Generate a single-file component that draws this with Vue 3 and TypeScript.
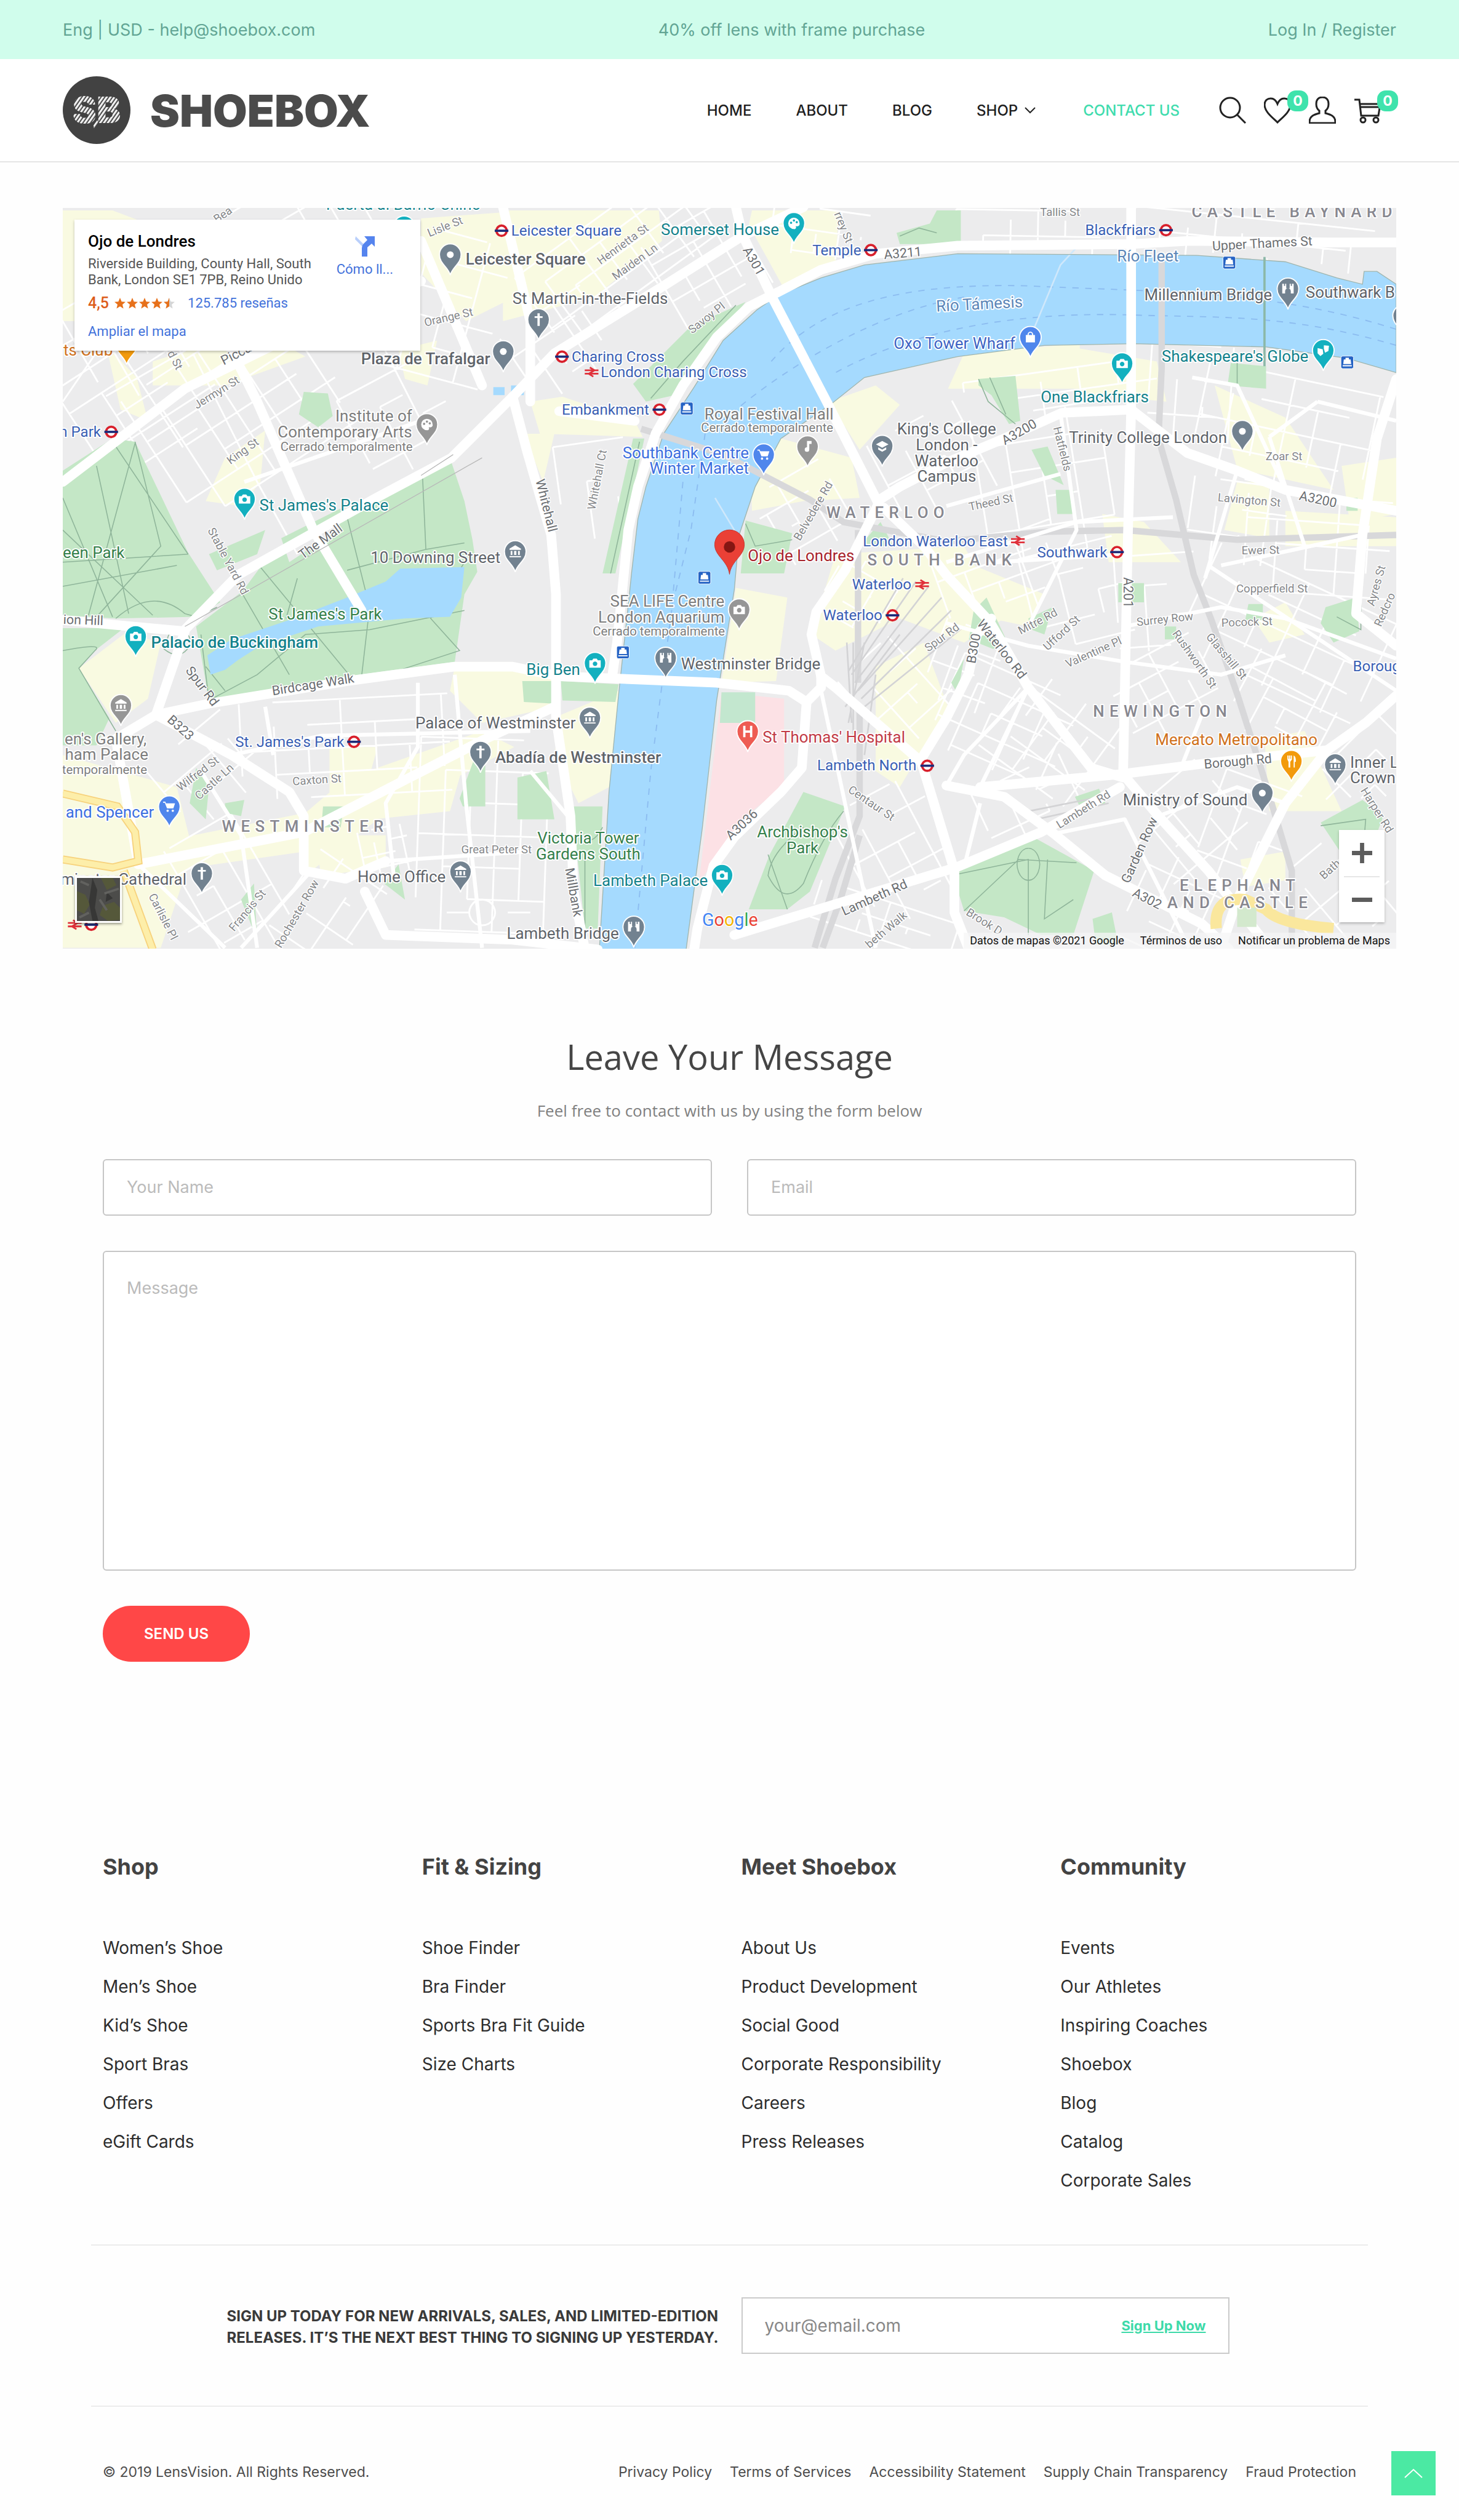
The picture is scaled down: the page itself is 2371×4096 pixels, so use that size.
<script setup lang="ts">
import { ref } from 'vue'

interface Pin { x: number; y: number; c: string; icon: string }
interface Label { x: number; y: number; t: string; c: string; a?: string; k?: string; r?: number }

const nav = ['HOME', 'ABOUT', 'BLOG']

const columns = [
  { title: 'Shop', links: ['Women’s Shoe', 'Men’s Shoe', 'Kid’s Shoe', 'Sport Bras', 'Offers', 'eGift Cards'] },
  { title: 'Fit & Sizing', links: ['Shoe Finder', 'Bra Finder', 'Sports Bra Fit Guide', 'Size Charts'] },
  { title: 'Meet Shoebox', links: ['About Us', 'Product Development', 'Social Good', 'Corporate Responsibility', 'Careers', 'Press Releases'] },
  { title: 'Community', links: ['Events', 'Our Athletes', 'Inspiring Coaches', 'Shoebox', 'Blog', 'Catalog', 'Corporate Sales'] },
]
const legal = ['Privacy Policy', 'Terms of Services', 'Accessibility Statement', 'Supply Chain Transparency', 'Fraud Protection']

const name = ref('')
const email = ref('')
const message = ref('')
const newsletter = ref('')

/* ---------- map geometry ---------- */

// Street grid inside a rotated rectangle, as path data
function grid(cx: number, cy: number, w: number, h: number, deg: number, du: number, dv: number): string {
  const a = (deg * Math.PI) / 180
  const p = (u: number, v: number) =>
    `${(cx + u * Math.cos(a) - v * Math.sin(a)).toFixed(1)} ${(cy + u * Math.sin(a) + v * Math.cos(a)).toFixed(1)}`
  let d = ''
  let n = 0
  for (let u = -w / 2; u <= w / 2; u += du) {
    const cut = (n++ % 3) * dv
    d += `M${p(u, -h / 2 + cut)}L${p(u, h / 2 - (n % 2) * dv)}`
  }
  for (let v = -h / 2; v <= h / 2; v += dv) {
    const cut = (n++ % 3) * du
    d += `M${p(-w / 2 + cut, v)}L${p(w / 2 - (n % 2) * du, v)}`
  }
  return d
}

const minor = [
  grid(75, 250, 110, 90, -33, 24, 17), grid(150, 255, 120, 90, -33, 19, 15), grid(140, 175, 200, 70, -30, 18, 20),
  grid(250, 262, 60, 60, -28, 22, 16), grid(275, 190, 70, 90, 15, 18, 18), grid(385, 160, 120, 55, -36, 14, 13),
  grid(350, 215, 60, 50, -34, 13, 14), grid(440, 165, 60, 60, 60, 13, 15), grid(510, 145, 60, 30, 8, 14, 14),
  grid(370, 305, 44, 60, -8, 18, 24), grid(640, 142, 90, 22, 1, 17, 16), grid(780, 148, 150, 24, 6, 17, 14),
  grid(215, 465, 130, 60, -3, 21, 15), grid(300, 520, 80, 120, 2, 16, 20), grid(140, 560, 90, 60, 60, 17, 16),
  grid(130, 480, 60, 50, -40, 13, 17), grid(205, 565, 60, 50, -56, 19, 15), grid(240, 530, 30, 30, -12, 9, 8),
  grid(580, 290, 60, 60, -28, 20, 14), grid(650, 300, 80, 90, -9, 20, 18), grid(625, 360, 80, 50, -20, 18, 13),
  grid(670, 370, 60, 60, -14, 22, 15), grid(745, 245, 60, 60, 4, 17, 22), grid(800, 270, 110, 70, 12, 18, 17),
  grid(770, 325, 60, 50, 8, 16, 17), grid(820, 340, 90, 60, 4, 19, 15), grid(720, 375, 50, 60, -4, 18, 19),
  grid(800, 395, 120, 70, 25, 20, 17), grid(725, 430, 50, 60, 62, 13, 14), grid(800, 440, 60, 50, 28, 15, 13),
  grid(625, 450, 80, 60, 24, 15, 14), grid(655, 460, 60, 70, -54, 16, 13), grid(600, 415, 40, 50, 20, 12, 14),
  grid(535, 370, 40, 40, -60, 11, 13), grid(560, 430, 50, 60, -42, 14, 17), grid(560, 530, 60, 80, -28, 16, 17),
  grid(550, 575, 90, 28, 18, 15, 12), grid(740, 515, 60, 60, 50, 17, 16), grid(775, 520, 50, 70, 20, 17, 18),
  grid(835, 560, 60, 70, -40, 17, 15), grid(730, 565, 60, 50, -65, 16, 15), grid(850, 480, 40, 60, 45, 15, 16),
  grid(640, 500, 60, 40, -25, 20, 15), grid(500, 320, 50, 50, 60, 14, 15), grid(660, 240, 120, 20, -8, 24, 14),
  'M300 560a8 8 0 1 0 .1 0M292 568h-14M316 568h14M39 250L80 190M39 215L110 175M205 150L262 262M120 220L160 300L185 345',
].join('')

const yellow = [
  'M39 131H70L120 150L80 200H39Z', 'M262 136L330 131L320 185L290 200L262 170Z', 'M313 131H410L412 150L370 185L313 200Z',
  'M468 131H522L520 165L487 178L466 140Z', 'M95 225L160 205L190 222L140 240L95 240Z', 'M66 215L85 235L92 262L75 255Z',
  'M140 285L165 268L162 300L150 315L128 312Z', 'M248 218L272 212L266 240L252 236Z', 'M330 250L350 247L395 262L400 272L336 270Z',
  'M326 270H345L338 300Z', 'M467 283L486 273L530 285L535 310L500 312L468 318Z', 'M516 250L545 240L560 252L535 280Z',
  'M458 366L490 372L483 424L449 425Z', 'M520 345L600 340L625 385L600 400L560 385L520 405L505 395Z',
  'M349 445L385 430L379 490L360 500L345 470Z', 'M49 416L78 394L100 400L92 435L72 450Z',
  'M39 470L110 490L120 530L100 590H39Z', 'M120 520L190 506L215 485L300 455L320 465L235 510L190 545L190 530L85 545Z',
  'M195 520H240V540L200 545Z', 'M205 465H235L225 500H205Z', 'M672 217L720 225L726 250L672 245Z', 'M672 242L590 242L600 220L672 214Z',
  'M756 240L800 260L830 305L770 292Z', 'M800 318L869 322V340H800Z', 'M770 300L790 300L790 335L762 330Z',
  'M686 320L712 325L735 350L690 350Z', 'M835 290L869 285V320L840 325Z', 'M589 345L650 370L640 390L617 385Z',
  'M787 460L812 455L835 505L790 505Z', 'M772 535L800 530L800 548L775 552Z', 'M545 415L575 400L590 440L560 490L545 480Z',
  'M230 490L290 470L280 505L232 510Z', 'M283 415L345 420V440L300 450L280 430Z', 'M780 385L800 375L812 395L790 400Z',
].join('')

const green = [
  'M39 293L70 273L84 275L117 344L137 375L122 384L72 385L39 383Z',
  'M281 288L263 297L216 321L162 353L151 368L122 390L130 436L216 421L283 412L289 370L297 356L294 336L289 312Z',
  'M39 391H77L59 405L49 416L68 447L60 464H39Z', 'M189 244L204 245L207 259L198 266L186 258Z',
  'M592 541L643 521L681 542L668 582H648L625 571L600 567Z', 'M500 493L526 502L504 555L490 566H466L479 532Z',
  'M356 502H375L372 578H364Z', 'M349 424L385 426L383 437L350 436Z', 'M325 424H345V438L326 437Z',
  'M464 188L439 220L420 246L402 250L394 239L430 203Z', 'M394 273H401L383 357H375Z', 'M464 324L493 332L488 357H461Z',
  'M583 131H598V152H572Z', 'M558 145L583 138L572 152H560Z', 'M609 236L632 234L635 262L628 264L617 246L609 240Z',
  'M822 512L848 498L861 508L849 540L834 530Z', 'M696 363H712V375H696Z',
  'M606 380L614 372L628 402L618 404L603 398Z', 'M825 378L844 372L846 393L830 400L822 388Z', 'M640 385L655 378L650 395L642 392Z',
  'M766 226L788 228V242L764 240Z', 'M642 280L652 278L662 302L650 296Z', 'M657 305H668V320H658Z', 'M669 496L684 491L688 500L673 504Z',
  'M680 572L692 568L696 588H682Z', 'M201 502H214L212 515H200Z', 'M118 500L122 478L130 490L128 510Z', 'M140 500L152 498L150 508L140 506Z',
  'M286 497L296 470L302 475V502H288Z', 'M592 425L600 410L596 432Z', 'M239 550L248 538L252 560Z',
  'M175 335L215 315L210 330L180 350Z', 'M130 345L165 330L160 345L135 355Z', 'M535 340L548 325L556 340Z', 'M838 310H845V318H838Z',
  'M322 484L340 480L345 510H322Z', 'M150 560L158 550L160 585Z', 'M725 390H732V398H725Z', 'M777 376H786V386H775Z',
].join('')

const greenPaths = [
  'M39 330L95 383M39 310L70 384M60 290L80 382M70 275L117 345M84 276L55 383M39 350L117 345M39 365L110 352M84 275L100 340L60 384',
  'M135 378L122 384L115 382Q95 365 72 385M162 353L218 421M216 322L230 378L225 421M263 298L265 342L216 355M265 342L289 338',
  'M125 395L130 436M130 436L160 420L190 395L230 392L289 380M151 370L180 420M240 420L286 405L268 385L289 350M185 360L178 385',
  'M592 545L640 535V582M600 567L634 535L670 537M652 535L650 572L668 560M640 528a7 10 0 1 0 .1 0',
  'M500 515Q480 530 478 545Q488 565 500 550Q512 520 525 505M478 532L490 566M464 326L470 340L493 336M398 275L380 357',
  'M128 415L140 430M458 190L425 225L405 248M822 514L850 510L848 535M362 520Q368 528 375 515M364 535V578',
  'M39 405Q65 400 59 405L49 416L72 455M105 395Q120 390 118 402Q112 412 102 404Z',
  'M609 236L615 250L632 264M616 235L626 258M770 226V242M560 147L572 142L583 145M847 366V392L832 384',
].join('')

const water = 'M869 177L857 169H849L848 177L832 173L800 163L745 159L596 158L538 165L511 173L484 184L471 193L450 212L432 241L413 270L402 303L397 323L393 357L392 367L385 432L379 493L373 591H427L437 516L446 436L457 367L460 333L470 303L486 273L518 251L538 235L596 222L650 215L706 214L788 216L838 223L869 232Z'
const lake = 'M289 353L249 354L240 362L216 372L180 386L144 398L129 408L131 420L140 417L148 411L162 402L198 390L252 385L280 384L287 372Z M318 240h8v6h-8Z M307 241h7v5h-7Z'
const ferries = 'M869 215C800 195 760 198 700 196C620 194 560 210 520 232M869 205C790 180 720 182 640 178C560 176 510 190 480 225M600 185C540 195 480 235 450 262M425 300L418 380L405 480L395 590M440 262L430 330L420 370M600 150'

const rails = 'M723 159V229L721 273L732 311L743 358L754 386L770 432L786 482L804 542V590M869 333L770 336L700 330L652 331L589 337L525 325L504 311L450 283L399 267M534 330L534 425M535 440V508L520 547L507 590M535 520L523 560L512 590'
const sheds = 'M532 425L578 365M530 420L570 362M528 418L562 360M534 430L586 372M536 435L592 380M526 440L560 395M538 440L600 390M528 450L538 400M531 460V400M538 470L545 420M527 400L530 450M640 505L690 495M645 510L690 500'

const major = [
  'M458 129L462 146L480 184L515 251L546 312', 'M500 129L462 147L413 178L374 202L345 220L319 247L281 285L234 310L148 358L115 392',
  'M319 247L328 281L343 333L346 370V447L355 508L357 555L364 591', 'M484 182L466 191L446 210L425 240L408 270L397 303L391 330L388 360L384 400L381 421',
  'M484 182L511 168L545 158L596 153L704 152L740 150L829 151H869', 'M704 129V255L702 333L699 482L721 508L752 542L790 590',
  'M546 312L560 303L589 288L625 273L661 257L704 255L739 282L770 293L800 305L869 318', 'M869 236L857 273L848 333L844 382L869 402',
  'M39 386L115 393L97 445L144 470L180 493L189 508V542L215 547L240 536', 'M97 445L130 438L216 424L283 415H319L348 421L446 425L491 430L502 437',
  'M511 421L505 395L508 381L526 355L546 315', 'M502 437L499 478L486 493L457 521L444 539L434 578L432 591',
  'M502 437L511 428L511 421L520 428L572 473', 'M86 538L189 518L253 485L300 461L345 440', 'M86 538L72 460L97 445',
  'M227 555L240 582L319 585L372 591', 'M550 316L575 340L589 358L616 387L640 428L679 478L699 484',
  'M573 473L589 447L603 419L608 395L617 385', 'M573 473L594 542V568L603 591', 'M457 582L493 571L595 540L648 518L697 490',
  'M589 489L625 496L656 519L688 545L748 575L765 591', 'M610 490L697 482L752 475L826 467L850 450L869 433',
  'M826 467L800 500L770 560L760 590', 'M39 300L115 242L170 215L262 175', 'M105 140L160 250L195 330L225 380', 'M262 150L300 240',
  'M313 129L330 200V250', 'M348 256L395 262',
]
const secondary = [
  'M589 388L640 402L700 412L760 420L800 408', 'M620 350L700 345', 'M848 333L760 352M752 352L869 430', 'M700 390L760 378L800 385L869 410',
  'M770 293L750 360', 'M800 305L770 240L742 235', 'M820 250L869 262M820 250L790 272', 'M790 272L812 340', 'M660 257L670 330L640 390',
  'M589 315L660 295', 'M589 350L670 325L730 322', 'M152 300L262 262', 'M165 440L170 470M260 425V465L240 500L245 545', 'M283 420L290 500L300 590',
  'M144 470L200 458L330 455', 'M86 538L140 590M125 480L150 520L160 590', 'M192 544L150 590', 'M240 536L330 530', 'M511 430L545 590',
  'M330 480L355 510', 'M610 500L600 540M640 428L610 490M656 519L700 510L740 590', 'M721 508L770 490L800 500', 'M750 440L735 478', 'M640 428L600 470L589 489',
]

const glyphs: Record<string, string> = {
  dot: 'M-6 0a6 6 0 1 0 12 0a6 6 0 1 0 -12 0Z',
  camera: 'M-10 -5H-5L-3 -8H3L5 -5H10V8H-10ZM0 -3a4 4 0 1 0 .1 0Z',
  cross: 'M-2 -11H2V-6H7V-3H2V11H-2V-3H-7V-6H-2Z',
  bank: 'M0 -11L10 -5V-3H-10V-5ZM-8 -1H-5V6H-8ZM-2 -1H2V6H-2ZM5 -1H8V6H5ZM-10 8H10V10H-10Z',
  bridge: 'M-10 -9H-7V-5H-5V-9H-3V-1H3V-9H5V-5H7V-9H10V8H5V4A5 5 0 0 0 -5 4V8H-10Z',
  cart: 'M-11 -9H-7L-6 -6H10L7 3H-4L-8 -7H-11ZM-3 5a2 2 0 1 0 .1 0ZM6 5a2 2 0 1 0 .1 0Z',
  bag: 'M-8 -4H-5A5 6 0 0 1 5 -4H8V9H-8ZM-3 -4H3A3 4 0 0 0 -3 -4Z',
  note: 'M-1 -10H7V-5H3V5A4 4 0 1 1 -1 1Z',
  cap: 'M0 -9L11 -3L0 3L-11 -3ZM-7 2L0 6L7 2V6L0 10L-7 6Z',
  palette: 'M0 -10A10 10 0 1 0 0 10A3 3 0 0 0 3 5H7A4 4 0 0 0 10 0A10 10 0 0 0 0 -10ZM-5 -3a2 2 0 1 0 .1 0ZM0 -7a2 2 0 1 0 .1 0ZM5 -4a2 2 0 1 0 .1 0Z',
  masks: 'M-10 -4L-1 -2L0 6L-5 10L-10 5ZM1 -9L10 -8L9 1L3 4L1 -3Z',
  food: 'M-7 -10H-5V-4H-4V-10H-2V-4H-1V-10H1V-3L-2 1V11H-5V1L-7 -3ZM4 -10Q8 -9 8 1H6V11H4Z',
  hospital: 'M-8 -10H-4V-2H4V-10H8V10H4V2H-4V10H-8Z',
}
const SL = '#728290', GY = '#969696', TE = '#13b0bf', BL = '#4f86ec', OR = '#f29a0c'
const pins: Pin[] = [
  { x: 790, y: 483, c: SL, icon: 'dot' }, { x: 883, y: 653, c: SL, icon: 'dot' }, { x: 749, y: 781, c: GY, icon: 'palette' },
  { x: 429, y: 912, c: TE, icon: 'camera' }, { x: 222, y: 640, c: OR, icon: 'food' }, { x: 709, y: 434, c: TE, icon: 'camera' },
  { x: 904, y: 1004, c: SL, icon: 'bank' }, { x: 945, y: 597, c: SL, icon: 'cross' }, { x: 1393, y: 428, c: TE, icon: 'palette' },
  { x: 1340, y: 834, c: BL, icon: 'cart' }, { x: 1417, y: 820, c: GY, icon: 'note' }, { x: 1548, y: 819, c: SL, icon: 'cap' },
  { x: 1808, y: 628, c: BL, icon: 'bag' }, { x: 1969, y: 674, c: TE, icon: 'camera' }, { x: 2260, y: 543, c: SL, icon: 'bridge' },
  { x: 2322, y: 651, c: TE, icon: 'masks' }, { x: 2180, y: 793, c: SL, icon: 'dot' }, { x: 238, y: 1153, c: TE, icon: 'camera' },
  { x: 212, y: 1274, c: GY, icon: 'bank' }, { x: 843, y: 1356, c: SL, icon: 'cross' }, { x: 297, y: 1452, c: BL, icon: 'cart' },
  { x: 354, y: 1569, c: SL, icon: 'cross' }, { x: 808, y: 1566, c: SL, icon: 'bank' }, { x: 1297, y: 1106, c: GY, icon: 'camera' },
  { x: 1044, y: 1200, c: TE, icon: 'camera' }, { x: 1168, y: 1191, c: SL, icon: 'bridge' }, { x: 1035, y: 1296, c: SL, icon: 'bank' },
  { x: 1312, y: 1320, c: '#ee5b52', icon: 'hospital' }, { x: 1267, y: 1572, c: TE, icon: 'camera' }, { x: 1112, y: 1663, c: SL, icon: 'bridge' },
  { x: 2266, y: 1372, c: OR, icon: 'food' }, { x: 2343, y: 1378, c: SL, icon: 'bank' }, { x: 2215, y: 1428, c: SL, icon: 'dot' },
  { x: 2463, y: 590, c: SL, icon: 'dot' },
]
const tubes = [[880, 405], [195, 758], [986, 626], [1157, 719], [1528, 439], [2046, 404], [1960, 969], [621, 1302], [1566, 1080], [1627, 1344], [160, 1623]]
const stations = [[1038, 653], [1786, 949], [1618, 1026], [131, 1623]]
const piers = [[1205, 717], [2157, 461], [2364, 636], [1236, 1014], [1093, 1145]]

const P = '#5f646a', G = '#7d7d7d', T = '#14828c', B = '#3a5fb4', V = '#35804b', S = '#3d6fe0', O = '#d0711c', A = '#87878f'
const labels: Label[] = [
  { x: 572, y: 368, t: 'Puerta al Barrio Chino', c: T }, { x: 817, y: 464, t: 'Leicester Square', c: P, k: 'mid' },
  { x: 860, y: 639, t: 'Plaza de Trafalgar', c: P, a: 'end', k: 'mid' }, { x: 723, y: 740, t: 'Institute of', c: G, a: 'end' },
  { x: 723, y: 768, t: 'Contemporary Arts', c: G, a: 'end' }, { x: 724, y: 791, t: 'Cerrado temporalmente', c: G, a: 'end', k: 'small' },
  { x: 455, y: 896, t: 'St James\'s Palace', c: T }, { x: 878, y: 988, t: '10 Downing Street', c: P, a: 'end' },
  { x: 110, y: 979, t: 'een Park', c: V }, { x: 177, y: 767, t: 'n Park', c: B, a: 'end', k: 'transit' }, { x: 111, y: 624, t: 'ts Club', c: O },
  { x: 897, y: 414, t: 'Leicester Square', c: B, k: 'transit' }, { x: 1367, y: 413, t: 'Somerset House', c: T, a: 'end' },
  { x: 1511, y: 448, t: 'Temple', c: B, a: 'end', k: 'transit' }, { x: 899, y: 533, t: 'St Martin-in-the-Fields', c: P },
  { x: 1003, y: 635, t: 'Charing Cross', c: B, k: 'transit' }, { x: 1054, y: 662, t: 'London Charing Cross', c: B, k: 'transit' },
  { x: 1139, y: 728, t: 'Embankment', c: B, a: 'end', k: 'transit' }, { x: 1236, y: 736, t: 'Royal Festival Hall', c: G },
  { x: 1230, y: 758, t: 'Cerrado temporalmente', c: G, k: 'small' }, { x: 1314, y: 805, t: 'Southbank Centre', c: S, a: 'end' },
  { x: 1314, y: 832, t: 'Winter Market', c: S, a: 'end' }, { x: 1661, y: 762, t: 'King\'s College', c: P, a: 'middle' },
  { x: 1661, y: 790, t: 'London -', c: P, a: 'middle' }, { x: 1661, y: 818, t: 'Waterloo', c: P, a: 'middle' },
  { x: 1661, y: 846, t: 'Campus', c: P, a: 'middle' }, { x: 1450, y: 909, t: 'WATERLOO', c: A, k: 'area' },
  { x: 1312, y: 985, t: 'Ojo de Londres', c: '#a8242c' }, { x: 1514, y: 959, t: 'London Waterloo East', c: B, k: 'transit' },
  { x: 1522, y: 992, t: 'SOUTH BANK', c: A, k: 'area' }, { x: 2028, y: 412, t: 'Blackfriars', c: B, a: 'end', k: 'transit' },
  { x: 2091, y: 381, t: 'CASTLE BAYNARD', c: A, k: 'area' }, { x: 1960, y: 459, t: 'Río Fleet', c: '#5b86b8' },
  { x: 1719, y: 543, t: 'Río Támesis', c: '#5b86b8', a: 'middle', r: -3 }, { x: 1568, y: 612, t: 'Oxo Tower Wharf', c: '#3d63c4' },
  { x: 2232, y: 527, t: 'Millennium Bridge', c: P, a: 'end' }, { x: 2291, y: 523, t: 'Southwark B', c: P },
  { x: 2296, y: 635, t: 'Shakespeare\'s Globe', c: T, a: 'end' }, { x: 1826, y: 706, t: 'One Blackfriars', c: T },
  { x: 2153, y: 778, t: 'Trinity College London', c: P, a: 'end' }, { x: 1943, y: 978, t: 'Southwark', c: B, a: 'end', k: 'transit' },
  { x: 471, y: 1087, t: 'St James\'s Park', c: V }, { x: 265, y: 1137, t: 'Palacio de Buckingham', c: T, k: 'mid' },
  { x: 257, y: 1307, t: 'en\'s Gallery,', c: G, a: 'end' }, { x: 260, y: 1334, t: 'ham Palace', c: G, a: 'end' },
  { x: 258, y: 1358, t: 'temporalmente', c: G, a: 'end', k: 'small' }, { x: 604, y: 1311, t: 'St. James\'s Park', c: B, a: 'end', k: 'transit' },
  { x: 1010, y: 1279, t: 'Palace of Westminster', c: P, a: 'end' }, { x: 869, y: 1339, t: 'Abadía de Westminster', c: P, k: 'mid' },
  { x: 270, y: 1435, t: 'and Spencer', c: S, a: 'end' }, { x: 389, y: 1460, t: 'WESTMINSTER', c: A, k: 'area' },
  { x: 327, y: 1553, t: 'minster Cathedral', c: P, a: 'end' }, { x: 782, y: 1548, t: 'Home Office', c: P, a: 'end' },
  { x: 1599, y: 1035, t: 'Waterloo', c: B, a: 'end', k: 'transit' }, { x: 1271, y: 1065, t: 'SEA LIFE Centre', c: G, a: 'end' },
  { x: 1271, y: 1093, t: 'London Aquarium', c: G, a: 'end' }, { x: 1272, y: 1116, t: 'Cerrado temporalmente', c: G, a: 'end', k: 'small' },
  { x: 1548, y: 1088, t: 'Waterloo', c: B, a: 'end', k: 'transit' }, { x: 1018, y: 1185, t: 'Big Ben', c: T, a: 'end' },
  { x: 1195, y: 1175, t: 'Westminster Bridge', c: P }, { x: 1338, y: 1303, t: 'St Thomas\' Hospital', c: '#c23b46' },
  { x: 1608, y: 1352, t: 'Lambeth North', c: B, a: 'end', k: 'transit' }, { x: 1032, y: 1481, t: 'Victoria Tower', c: V, a: 'middle' },
  { x: 1032, y: 1509, t: 'Gardens South', c: V, a: 'middle' }, { x: 1408, y: 1470, t: 'Archbishop\'s', c: V, a: 'middle' },
  { x: 1408, y: 1498, t: 'Park', c: V, a: 'middle' }, { x: 1242, y: 1555, t: 'Lambeth Palace', c: T, a: 'end' },
  { x: 1086, y: 1648, t: 'Lambeth Bridge', c: P, a: 'end' }, { x: 2374, y: 1178, t: 'Boroug', c: B, k: 'transit' },
  { x: 1918, y: 1258, t: 'NEWINGTON', c: A, k: 'area' }, { x: 2027, y: 1308, t: 'Mercato Metropolitano', c: O },
  { x: 2369, y: 1348, t: 'Inner L', c: P }, { x: 2369, y: 1375, t: 'Crown', c: P },
  { x: 2189, y: 1413, t: 'Ministry of Sound', c: P, a: 'end' }, { x: 2070, y: 1564, t: 'ELEPHANT', c: A, k: 'area' },
  { x: 2048, y: 1594, t: 'AND CASTLE', c: A, k: 'area' },
]

// Street names: x, y of the middle of the name, rotation, text, and whether it is a main road
const streets: [number, number, number, string, boolean?][] = [
  [781, 398, -22, 'Lisle St'], [787, 557, -13, 'Orange St'], [380, 689, -32, 'Jermyn St'], [426, 792, -36, 'King St'],
  [562, 950, -36, 'The Mall', true], [400, 985, 62, 'Stable Yard Rd'], [414, 621, -27, 'Picca', true], [391, 377, -35, 'Bea'],
  [307, 632, 62, 'd St'],
  [1584, 444, -5, 'A3211', true], [1093, 429, -36, 'Henrietta St'], [1114, 460, -36, 'Maiden Ln'], [1323, 458, 60, 'A301', true],
  [1240, 558, -38, 'Savoy Pl'], [1048, 842, -79, 'Whitehall Ct'], [959, 887, 76, 'Whitehall', true], [1427, 897, -60, 'Belvedere Rd'],
  [1480, 399, 68, 'rrey St'], [1860, 373, 0, 'Tallis St'], [2215, 427, -3, 'Upper Thames St', true], [1788, 758, -30, 'A3200', true],
  [1864, 788, 76, 'Hatfields'], [2253, 801, 0, 'Zoar St'], [1739, 882, -12, 'Theed St'], [2192, 878, 5, 'Lavington St'],
  [2313, 876, 12, 'A3200', true], [2212, 966, -1, 'Ewer St'], [146, 1088, 2, 'ion Hill', true], [549, 1201, -9, 'Birdcage Walk', true],
  [355, 1204, 53, 'Spur Rd', true], [317, 1277, 42, 'B323', true], [347, 1358, -37, 'Wilfred St'], [376, 1372, -42, 'Castle Ln'],
  [556, 1369, -4, 'Caxton St'], [871, 1491, 0, 'Great Peter St'], [286, 1609, 63, 'Carlisle Pl'], [434, 1598, -50, 'Francis St'],
  [521, 1604, -60, 'Rochester Row'], [1653, 1119, -36, 'Spur Rd'], [1529, 1410, 34, 'Centaur St'], [1301, 1447, -43, 'A3036', true],
  [1007, 1566, 80, 'Millbank', true], [1534, 1575, -24, 'Lambeth Rd', true], [1555, 1632, -40, 'beth Walk'], [1980, 1040, 90, 'A201', true],
  [2232, 1033, 0, 'Copperfield St'], [2415, 1028, -74, 'Ayres St'], [2430, 1070, -66, 'Redcro'], [1821, 1091, -28, 'Mitre Rd'],
  [1863, 1111, -43, 'Ufford St'], [2044, 1087, -6, 'Surrey Row'], [2188, 1092, -2, 'Pocock St'], [1708, 1138, -80, 'B300', true],
  [1758, 1139, 52, 'Waterloo Rd', true], [1919, 1145, -24, 'Valentine Pl'], [2096, 1157, 55, 'Rushworth St'], [2152, 1152, 50, 'Glasshill St'],
  [2172, 1336, -5, 'Borough Rd', true], [1901, 1421, -32, 'Lambeth Rd'], [2416, 1422, 58, 'Harper Rd'], [1999, 1492, -66, 'Garden Row', true],
  [2334, 1526, -42, 'Bath'], [2013, 1577, 27, 'A302', true], [1727, 1618, 32, 'Brook D'],
]
</script>

<template>
  <div class="page">
    <div class="topbar">
      <span>Eng | USD - help@shoebox.com</span>
      <span>40% off lens with frame purchase</span>
      <a href="#">Log In / Register</a>
    </div>

    <header class="header">
      <a class="brand" href="#" aria-label="Shoebox">
        <svg class="brand-mark" viewBox="0 0 108 108" aria-hidden="true">
          <defs>
            <pattern id="hatch" width="5" height="5" patternUnits="userSpaceOnUse" patternTransform="rotate(35)">
              <rect width="5" height="5" fill="#484848" />
              <rect width="3" height="5" fill="#f4f4f4" />
            </pattern>
          </defs>
          <circle cx="54" cy="54" r="54" fill="#424242" />
          <text x="54" y="75" text-anchor="middle" class="brand-letters" fill="url(#hatch)">SB</text>
          <path d="M49 78L55 70L57 74L50 84Z" fill="url(#hatch)" />
        </svg>
        <span class="brand-name">SHOEBOX</span>
      </a>
      <nav class="nav">
        <a v-for="n in nav" :key="n" href="#">{{ n }}</a>
        <a href="#" class="has-menu">SHOP
          <svg width="20" height="12" viewBox="0 0 20 12"><path d="M2 2L10 10L18 2" fill="none" stroke="#222" stroke-width="2" /></svg>
        </a>
        <a href="#" class="active">CONTACT US</a>
      </nav>
      <div class="tools">
        <button type="button" aria-label="Search">
          <svg viewBox="0 0 44 44"><circle cx="18" cy="18" r="16" /><path d="M29 29L43 43" /></svg>
        </button>
        <button type="button" aria-label="Wishlist">
          <svg viewBox="0 0 44 44"><path d="M22 42C14 34 1 25 1 13C1 6 6 3 11 3C17 3 20 7 22 12C24 7 27 3 33 3C38 3 43 6 43 13C43 25 30 34 22 42Z" /></svg>
          <span class="badge">0</span>
        </button>
        <button type="button" aria-label="Account">
          <svg viewBox="0 0 44 44"><path d="M1 43V41C1 31 10 29 17 27V23C13 20 12 16 12 12C12 5 16 1 22 1S32 5 32 12C32 16 31 20 27 23V27C34 29 43 31 43 41V43Z" /></svg>
        </button>
        <button type="button" aria-label="Cart">
          <svg viewBox="0 0 44 44"><path d="M1 5H9L12 31H40L43 12H10M11 17H42" /><circle cx="15" cy="38" r="4" /><circle cx="36" cy="38" r="4" /></svg>
          <span class="badge">0</span>
        </button>
      </div>
    </header>

    <main>
      <section class="map">
        <svg class="canvas" viewBox="110 365 2340 1300" role="img" aria-label="Map of central London">
          <svg x="110" y="365" width="2340" height="1300" viewBox="39 129.5 830 461" preserveAspectRatio="none">
            <rect x="39" y="129" width="830" height="463" fill="#ececed" />
            <path :d="yellow" fill="#f9fae1" />
            <path :d="minor" fill="none" stroke="#fff" stroke-width="1.1" />
            <path d="M449 431L488 435V489L468 505L448 532L435 549Z" fill="#fce1e5" />
            <path d="M449 431H470V450H448Z" fill="#c3e7cf" />
            <path :d="green" fill="#c4e7c6" />
            <path :d="greenPaths" fill="none" stroke="#8fb59a" stroke-width=".6" />
            <path :d="water + lake" fill="#a5dafe" />
            <path :d="ferries" fill="none" stroke="#8cbcf0" stroke-width=".7" stroke-dasharray="4 4" />
            <path d="M640 213L660 165L672 152M445 310L460 335" fill="none" stroke="#cfe8fb" stroke-width="1" />
            <path :d="water" fill="none" stroke="#9fb5ae" stroke-width=".5" />
            <path :d="rails" fill="none" stroke="#d8d8da" stroke-width="4" />
            <path :d="sheds" fill="none" stroke="#d3d3d5" stroke-width="1" />
            <path v-for="d in secondary" :key="d" :d="d" fill="none" stroke="#fff" stroke-width="2.4" stroke-linejoin="round" />
            <path v-for="d in major" :key="d" :d="d" fill="none" stroke="#fff" stroke-width="6" stroke-linejoin="round" stroke-linecap="round" />
            <path d="M787 160V228" stroke="#8cb8a8" stroke-width="1.4" fill="none" />
            <path d="M300 285L115 390M282 283L262 296" stroke="#b8b8b8" stroke-width=".5" fill="none" />
            <path d="M39 494L73 502L84 518L86 536L70 540L39 535M77 542L95 591" fill="none" stroke="#f7d27c" stroke-width="5" />
            <path d="M39 494L73 502L84 518L86 536L70 540L39 535M77 542L95 591" fill="none" stroke="#fdeea9" stroke-width="3.6" />
            <path d="M757 578Q755 558 775 560L788 566Q795 575 830 578" fill="none" stroke="#fae79d" stroke-width="7" />
            <path d="M770 565h12v12h-12Z" fill="#d3e9cd" />
          </svg>

          <text
            v-for="(s, i) in streets" :key="'s' + i" class="street" :class="{ main: s[4] }"
            :transform="`translate(${s[0]} ${s[1]}) rotate(${s[2]})`" text-anchor="middle" dominant-baseline="central"
          >{{ s[3] }}</text>

          <g v-for="(p, i) in pins" :key="'p' + i" :transform="`translate(${p.x} ${p.y})`">
            <path d="M0 0C-3 -14 -19 -20 -19 -36A19 19 0 1 1 19 -36C19 -20 3 -14 0 0Z" :fill="p.c" stroke="#fff" stroke-width="2" />
            <path :d="glyphs[p.icon]" transform="translate(0 -36)" fill="#fff" fill-rule="evenodd" />
          </g>
          <g v-for="(p, i) in tubes" :key="'t' + i" :transform="`translate(${p[0]} ${p[1]})`">
            <circle r="9" fill="#fff" stroke="#d8202c" stroke-width="4" />
            <rect x="-12" y="-2" width="24" height="4" fill="#1d2a78" />
          </g>
          <path
            v-for="(p, i) in stations" :key="'r' + i" :transform="`translate(${p[0]} ${p[1]})`"
            d="M-12 -3H12M-12 3H12M-3 -8L5 -3L-5 3L3 8" fill="none" stroke="#e0303a" stroke-width="3"
          />
          <g v-for="(p, i) in piers" :key="'f' + i" :transform="`translate(${p[0]} ${p[1]})`">
            <rect x="-11" y="-11" width="22" height="22" rx="3" fill="#2563c4" stroke="#fff" stroke-width="1" />
            <path d="M-3 -8H3V-5H6L7 3H-7L-6 -5H-3ZM-8 5H8V7H-8Z" fill="#fff" />
          </g>
          <text
            v-for="(l, i) in labels" :key="'l' + i" class="label" :class="l.k" :fill="l.c" :text-anchor="l.a || 'start'"
            :transform="`translate(${l.x} ${l.y}) rotate(${l.r || 0})`"
          >{{ l.t }}</text>

          <g transform="translate(1280 1008)">
            <path d="M0 0C-3 -24 -26 -32 -26 -52A26 26 0 1 1 26 -52C26 -32 3 -24 0 0Z" fill="#ea4036" stroke="#c4302a" stroke-width="1" />
            <circle cy="-48" r="10" fill="#851613" />
          </g>
          <text x="1232" y="1625" class="google"><tspan fill="#4285f4">G</tspan><tspan fill="#ea4335">o</tspan><tspan fill="#f4b400">o</tspan><tspan fill="#4285f4">g</tspan><tspan fill="#34a853">l</tspan><tspan fill="#ea4335">e</tspan></text>
        </svg>

        <div class="card">
          <div class="place">
            <strong>Ojo de Londres</strong>
            <p>Riverside Building, County Hall, South<br>Bank, London SE1 7PB, Reino Unido</p>
            <div class="rating">
              <b>4,5</b>
              <svg width="100" height="20" viewBox="0 0 100 20" aria-hidden="true">
                <g v-for="n in 5" :key="n" :transform="`translate(${(n - 1) * 20} 0)`">
                  <path d="M10 1L12.600 7.200L19 7.800L14 12L15.600 18.500L10 15L4.400 18.500L6 12L1 7.800L7.400 7.200Z" :fill="n === 5 ? '#d5d5d5' : '#e7711b'" />
                  <path v-if="n === 5" d="M10 1V15L4.400 18.500L6 12L1 7.800L7.400 7.200Z" fill="#e7711b" />
                </g>
              </svg>
              <a href="#">125.785 reseñas</a>
            </div>
            <a href="#">Ampliar el mapa</a>
          </div>
          <a class="route" href="#">
            <svg width="34" height="34" viewBox="0 0 34 34" aria-hidden="true">
              <path d="M2 1L17 16V22L1 6Z" fill="#b9cffb" />
              <path d="M12 34V20Q12 16 15 13L21 7L16 1H33V18L28 13L21 19V34Z" fill="#5584ee" />
            </svg>
            Cómo ll...
          </a>
        </div>

        <button class="satellite" type="button" aria-label="Satellite view">
          <svg viewBox="0 0 72 72" aria-hidden="true">
            <rect width="72" height="72" fill="#4c4c4a" />
            <path d="M0 22L14 28L22 44L12 60L0 54ZM44 46L62 40L72 50V70L52 72L38 62ZM40 0H60L66 12L50 20Z" fill="#55583a" />
            <path d="M26 0L34 20L30 50L36 72H26L20 40ZM50 24L60 34L48 40Z" fill="#373736" />
            <path d="M6 6L20 12M46 26L70 18M38 36L50 54M4 66L20 58" stroke="#62625f" stroke-width="4" />
          </svg>
        </button>

        <div class="zoom">
          <button type="button" aria-label="Zoom in"><svg viewBox="0 0 34 34"><path d="M17 0V34M0 17H34" /></svg></button>
          <button type="button" aria-label="Zoom out"><svg viewBox="0 0 34 34"><path d="M0 17H34" /></svg></button>
        </div>

        <div class="credits">
          <span>Datos de mapas ©2021 Google</span>
          <a href="#">Términos de uso</a>
          <a href="#">Notificar un problema de Maps</a>
        </div>
      </section>

      <section class="contact">
        <h1>Leave Your Message</h1>
        <p>Feel free to contact with us by using the form below</p>
        <form @submit.prevent>
          <input v-model="name" type="text" placeholder="Your Name" aria-label="Your Name">
          <input v-model="email" type="email" placeholder="Email" aria-label="Email">
          <textarea v-model="message" placeholder="Message" aria-label="Message"></textarea>
          <button type="submit">SEND US</button>
        </form>
      </section>
    </main>

    <footer class="footer">
      <div class="columns">
        <div v-for="c in columns" :key="c.title" class="column">
          <h2>{{ c.title }}</h2>
          <ul>
            <li v-for="l in c.links" :key="l"><a href="#">{{ l }}</a></li>
          </ul>
        </div>
      </div>
      <form class="newsletter" @submit.prevent>
        <label for="newsletter-email">SIGN UP TODAY FOR NEW ARRIVALS, SALES, AND LIMITED-EDITION<br>RELEASES. IT’S THE NEXT BEST THING TO SIGNING UP YESTERDAY.</label>
        <div class="field">
          <input id="newsletter-email" v-model="newsletter" type="email" placeholder="your@email.com">
          <button type="submit">Sign Up Now</button>
        </div>
      </form>
      <div class="legal">
        <span>© 2019 LensVision. All Rights Reserved.</span>
        <nav>
          <a v-for="l in legal" :key="l" href="#">{{ l }}</a>
        </nav>
      </div>
    </footer>

    <button class="to-top" type="button" aria-label="Back to top">
      <svg width="32" height="18" viewBox="0 0 32 18"><path d="M2 16L16 3L30 16" fill="none" stroke="#fff" stroke-width="2" /></svg>
    </button>
  </div>
</template>

<style>
body { background: #fefefe; }
</style>

<style scoped>
.page { font-family: Inter, "Open Sans", sans-serif; color: #2d2d2d; background: #fefefe; }
.page *, .page *::before { box-sizing: border-box; }
a { color: inherit; text-decoration: none; }
button { font-family: inherit; border: 0; padding: 0; background: none; cursor: pointer; }
ul, p, h1, h2 { margin: 0; padding: 0; list-style: none; }

.topbar { display: flex; justify-content: space-between; align-items: center; height: 96px; padding: 0 102px; background: #d0fdec; color: #62a594; font-size: 27px; }

.header { display: flex; align-items: center; height: 168px; padding: 0 102px; border-bottom: 2px solid #e5e5e5; background: #fff; }
.brand { display: flex; align-items: center; gap: 32px; margin-right: auto; }
.brand-mark { width: 110px; height: 110px; }
.brand-letters { font: 900 58px Inter, sans-serif; }
.brand-name { font-size: 72px; font-weight: 900; color: #4b4b4b; }
.nav { display: flex; align-items: center; gap: 72px; font-size: 24px; font-weight: 500; color: #1e1e1e; }
.has-menu { display: flex; align-items: center; gap: 10px; }
.nav .active { color: #3fdcae; margin-left: 4px; }
.tools { display: flex; gap: 29px; margin: 0 25px 0 64px; }
.tools button { position: relative; width: 44px; height: 44px; }
.tools svg { display: block; width: 44px; height: 44px; fill: none; stroke: #222; stroke-width: 3; }
.badge { position: absolute; left: 38px; top: -10px; width: 34px; height: 34px; border-radius: 14px; background: #3fe3ac; color: #fff; font-size: 23px; font-weight: 700; line-height: 34px; text-align: center; }

.map { position: relative; margin: 74px 102px 0; font-family: Roboto, sans-serif; }
.canvas { display: block; width: 100%; height: auto; }
.label { font-size: 28px; paint-order: stroke; stroke: #fff; stroke-width: 4px; stroke-linejoin: round; }
.label.transit { font-size: 26px; }
.label.mid { font-weight: 500; }
.label.small { font-size: 22px; }
.label.area { font-size: 28px; font-weight: 500; letter-spacing: 9px; }
.street { font-size: 20px; fill: #85878a; paint-order: stroke; stroke: #fff; stroke-width: 3px; }
.street.main { font-size: 23px; fill: #6b6e72; }
.google { font-size: 31px; paint-order: stroke; stroke: #fff; stroke-width: 3px; }

.card { position: absolute; left: 19px; top: 19px; display: flex; justify-content: space-between; width: 562px; height: 213px; padding: 20px 44px 0 22px; background: #fff; box-shadow: 0 2px 4px rgba(0, 0, 0, .25); font-size: 22px; line-height: 26px; color: #555; }
.card strong { display: block; font-size: 26px; font-weight: 500; line-height: 30px; color: #000; }
.card p { margin-top: 9px; white-space: nowrap; }
.card a { color: #4272db; }
.rating { display: flex; align-items: center; margin: 12px 0 20px; }
.rating b { margin-right: 8px; font-size: 25px; font-weight: 500; color: #dd5d1c; }
.rating a { margin-left: 20px; }
.route { display: flex; flex-direction: column; align-items: center; gap: 8px; padding-top: 6px; }

.satellite { position: absolute; left: 20px; bottom: 42px; width: 76px; height: 76px; border: 3px solid #fff; box-shadow: 0 2px 4px rgba(0, 0, 0, .4); }
.satellite svg { display: block; width: 100%; }
.zoom { position: absolute; right: 19px; bottom: 43px; width: 74px; background: #fff; box-shadow: 0 2px 4px rgba(0, 0, 0, .25); }
.zoom button { display: flex; align-items: center; justify-content: center; width: 58px; height: 75px; margin: 0 8px; }
.zoom button + button { border-top: 2px solid #e6e6e6; }
.zoom svg { width: 33px; fill: none; stroke: #5c5c5c; stroke-width: 7; }
.credits { position: absolute; right: 0; bottom: 0; display: flex; gap: 26px; padding: 0 10px; background: rgba(245, 245, 245, .75); font-size: 18px; line-height: 26px; color: #111; }

.contact { margin: 137px 167px 0; }
.contact h1 { font: 400 56px/76px "Open Sans", sans-serif; color: #454545; text-align: center; }
.contact p { margin-top: 32px; font: 400 26px/36px "Open Sans", sans-serif; color: #808080; text-align: center; }
.contact form { display: grid; grid-template-columns: 1fr 1fr; gap: 57px; margin-top: 61px; }
.contact input, .contact textarea { font: 400 27px/33px Inter, sans-serif; border: 2px solid #c6c6c6; border-radius: 6px; padding: 0 37px; background: #fff; outline: 0; width: 100%; }
.contact input { height: 92px; }
.contact textarea { grid-column: 1 / -1; display: block; height: 520px; padding-top: 42px; resize: none; }
.contact ::placeholder { color: #bbb; opacity: 1; }
.contact form button { justify-self: start; width: 239px; height: 91px; border-radius: 46px; background: #ff4747; color: #fff; font-size: 24px; font-weight: 600; }

.footer { margin: 312px 148px 0; padding-bottom: 64px; }
.columns { display: grid; grid-template-columns: repeat(4, 1fr); padding-bottom: 72px; border-bottom: 2px solid #ececec; }
.column { padding: 0 19px; }
.column h2 { font-size: 36px; line-height: 42px; font-weight: 700; color: #434343; margin-bottom: 80px; }
.column li { font-size: 28px; line-height: 63px; }
.newsletter { display: grid; grid-template-columns: 1fr 1fr; align-items: center; padding: 84px 0; border-bottom: 2px solid #ececec; }
.newsletter label { justify-self: end; padding-top: 4px; margin-right: 18px; font-size: 24px; line-height: 35px; font-weight: 700; color: #3a3a3a; white-space: nowrap; }
.field { display: flex; align-items: center; width: 793px; height: 92px; margin-left: 19px; padding: 0 36px; border: 2px solid #cacaca; background: #fff; }
.field input { flex: 1; min-width: 0; border: 0; outline: 0; padding: 0; background: none; font: 400 28px/34px Inter, sans-serif; }
.field ::placeholder { color: #888; opacity: 1; }
.field button { font-size: 22px; font-weight: 700; color: #3ddaa9; text-decoration: underline; }
.legal { display: flex; justify-content: space-between; padding: 93px 19px 0; font-size: 23px; line-height: 26px; color: #4d4d4d; }
.legal nav { display: flex; gap: 29px; }

.to-top { position: fixed; right: 38px; bottom: 40px; width: 72px; height: 72px; background: #4be9a3; display: flex; align-items: center; justify-content: center; }
</style>
